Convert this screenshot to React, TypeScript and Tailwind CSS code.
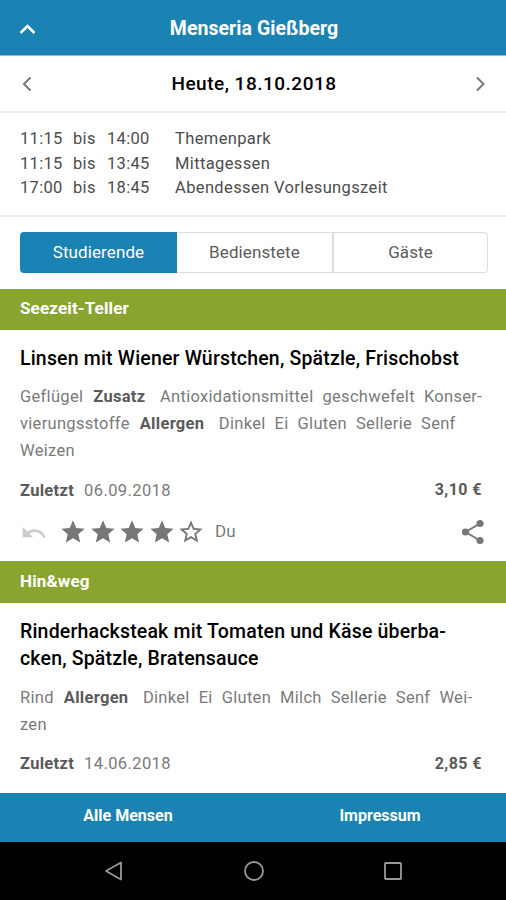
import { Fragment } from 'react';
import type { ReactNode } from 'react';

const times = [
  { from: '11:15', to: '14:00', label: 'Themenpark' },
  { from: '11:15', to: '13:45', label: 'Mittagessen' },
  { from: '17:00', to: '18:45', label: 'Abendessen Vorlesungszeit' },
];

const STAR = 'M12 17.27 18.18 21l-1.64-7.03L22 9.24l-7.19-.61L12 2 9.19 8.63 2 9.24l5.46 4.73L5.82 21z';
const STAR_OUTLINE =
  'M22 9.24l-7.19-.62L12 2 9.19 8.63 2 9.24l5.46 4.73L5.82 21 12 17.27 18.18 21l-1.63-7.03L22 9.24zM12 15.4l-3.76 2.27 1-4.28-3.32-2.88 4.38-.38L12 6.1l1.71 4.04 4.38.38-3.32 2.88 1 4.28L12 15.4z';

function Chevron({ points, className }: { points: string; className: string }) {
  return (
    <svg viewBox="0 0 18 18" className={className} fill="none" stroke="currentColor">
      <polyline points={points} />
    </svg>
  );
}

function Counter({ title, className }: { title: string; className: string }) {
  return (
    <div
      className={`flex shrink-0 items-center bg-[#89a530] pl-5 text-[17px] font-bold tracking-[0.15px] text-white ${className}`}
    >
      {title}
    </div>
  );
}

/* One line of additives and allergens; words starting with * are headings. */
function Line({ words }: { words: string[] }) {
  return (
    <div className="flex h-[27px] items-center gap-[9px] whitespace-nowrap">
      {words.map((word) => (
        <Fragment key={word}>
          {word.startsWith('*') ? (
            <b className="mr-[5.5px] ml-px font-bold text-[#5a5a5a]">{word.slice(1)}</b>
          ) : (
            <span>{word}</span>
          )}
        </Fragment>
      ))}
    </div>
  );
}

function Last({ date, price }: { date: string; price: string }) {
  return (
    <div className="flex h-6 items-center justify-between pr-6">
      <div className="flex gap-[10px]">
        <b className="font-bold text-[#5a5a5a]">Zuletzt</b>
        <span className="tracking-[0.4px]">{date}</span>
      </div>
      <b className="pb-0.5 text-[16px] font-bold tracking-[0.45px] text-[#5a5a5a]">{price}</b>
    </div>
  );
}

function Title({ children }: { children: ReactNode }) {
  return (
    <h2 className="text-[19.5px] leading-[27.5px] font-medium tracking-[0.18px] whitespace-nowrap text-black">{children}</h2>
  );
}

export default function App() {
  return (
    <div className="flex h-[900px] w-[506px] flex-col overflow-hidden bg-white font-[Roboto,sans-serif] text-[16.5px] tracking-[0.3px] text-[#7a7a7a]">
      <header className="flex h-14 shrink-0 items-center border-b border-[#8cbcd6] bg-[#1a83b4] px-[18px] text-white">
        <Chevron points="2.5,13 9.5,6 16.5,13" className="mt-0.5 size-[18px] stroke-[2.6]" />
        <h1 className="flex-1 pt-[3px] pr-[16px] text-center text-[19.5px] font-bold tracking-[0.05px]">Menseria Gießberg</h1>
      </header>

      <div className="flex h-[57px] shrink-0 items-center justify-between border-b-2 border-[#ececec] px-[18px] text-[#777]">
        <Chevron points="12.5,2.5 6,9 12.5,15.5" className="size-[18px] stroke-2" />
        <span className="pt-0.5 pl-0.5 text-[19px] font-medium tracking-[0.5px] text-black">Heute, 18.10.2018</span>
        <Chevron points="7,2.5 13.5,9 7,15.5" className="size-[18px] stroke-2" />
      </div>

      <div className="flex h-[104px] shrink-0 flex-col border-b-2 border-[#ececec] pt-[14px] pl-5 text-[#4c4c4c]">
        {times.map((t) => (
          <div key={t.label} className="grid h-[24.5px] grid-cols-[53px_34px_68px_auto] items-center whitespace-nowrap">
            <span>{t.from}</span>
            <span>bis</span>
            <span>{t.to}</span>
            <span className="tracking-[0.37px]">{t.label}</span>
          </div>
        ))}
      </div>

      <div className="mx-5 mt-[15px] flex h-[41px] w-[468px] shrink-0 rounded-[4px] text-center text-[17px] leading-[39px] tracking-[0.1px] text-[#5c5c5c]">
        <div className="w-[157px] rounded-l-[4px] bg-[#1a83b4] pt-px text-white">Studierende</div>
        <div className="w-[155px] border-y border-[#dedede]">Bedienstete</div>
        <div className="w-[156px] rounded-r-[4px] border border-l-2 border-[#dedede]">Gäste</div>
      </div>

      <div className="h-4 shrink-0" />
      <Counter title="Seezeit-Teller" className="h-[41px] pb-px" />
      <section className="h-[231px] shrink-0 pt-[14.5px] pl-5">
        <Title>Linsen mit Wiener Würstchen, Spätzle, Frischobst</Title>
        <div className="mt-3">
          <Line words={['Geflügel', '*Zusatz', 'Antioxidationsmittel', 'geschwefelt', 'Konser-']} />
          <Line words={['vierungsstoffe', '*Allergen', 'Dinkel', 'Ei', 'Gluten', 'Sellerie', 'Senf']} />
          <Line words={['Weizen']} />
        </div>
        <div className="mt-3.5">
          <Last date="06.09.2018" price="3,10 €" />
        </div>
        <div className="mt-[15px] flex h-[28px] items-center">
          <svg viewBox="0 0 26 14" className="ml-px mr-[12px] h-[14px] w-[26px]">
            <path d="M1.6 2v10.3h10.5L8.4 8.6C13.5 5.4 19.5 6.6 22.8 12.9l2-.9C21.2 4.2 12.6 2 6.4 6.6z" fill="#ccc" />
          </svg>
          {[1, 2, 3, 4, 5].map((n) => (
            <svg key={n} viewBox="0 0 24 24" className="mr-[1.6px] size-[28px] shrink-0" fill="#777">
              <path d={n < 5 ? STAR : STAR_OUTLINE} />
            </svg>
          ))}
          <span className="ml-[8px] text-[17px] tracking-[0px]">Du</span>
          <svg viewBox="0 0 24 26" className="mr-[21px] ml-auto h-[26px] w-[24px]" fill="#777" stroke="#777">
            <path d="M19 4.5 4.5 13 19 21.5" fill="none" strokeWidth="2" />
            <circle cx="19" cy="4.5" r="3.6" stroke="none" />
            <circle cx="4.5" cy="13" r="3.6" stroke="none" />
            <circle cx="19" cy="21.5" r="3.6" stroke="none" />
          </svg>
        </div>
      </section>

      <Counter title="Hin&amp;weg" className="h-[42px] pb-px" />
      <section className="h-[190px] shrink-0 pt-[14.5px] pl-5">
        <Title>
          Rinderhacksteak mit Tomaten und Käse überba-
          <br />
          cken, Spätzle, Bratensauce
        </Title>
        <div className="mt-3">
          <Line words={['Rind', '*Allergen', 'Dinkel', 'Ei', 'Gluten', 'Milch', 'Sellerie', 'Senf', 'Wei-']} />
          <Line words={['zen']} />
        </div>
        <div className="mt-3.5">
          <Last date="14.06.2018" price="2,85 €" />
        </div>
      </section>

      <footer className="grid h-[49px] shrink-0 grid-cols-2 items-center bg-[#1a83b4] pb-[3px] pl-0.5 text-center text-[16px] font-bold tracking-[0px] text-white">
        <span>Alle Mensen</span>
        <span>Impressum</span>
      </footer>
      <nav className="flex flex-1 justify-between bg-black pt-[18px] pr-[102px] pl-[103px]">
        <svg viewBox="0 0 22 22" className="size-[22px]" fill="none" stroke="#999" strokeWidth="1.8">
          <path d="M3 11 18 2.5v17z" strokeLinejoin="round" />
        </svg>
        <svg viewBox="0 0 22 22" className="size-[22px]" fill="none" stroke="#999" strokeWidth="1.8">
          <circle cx="11" cy="11" r="9" />
        </svg>
        <svg viewBox="0 0 22 22" className="size-[22px]" fill="none" stroke="#999" strokeWidth="1.8">
          <rect x="3" y="3" width="16" height="16" rx="0.8" />
        </svg>
      </nav>
    </div>
  );
}
